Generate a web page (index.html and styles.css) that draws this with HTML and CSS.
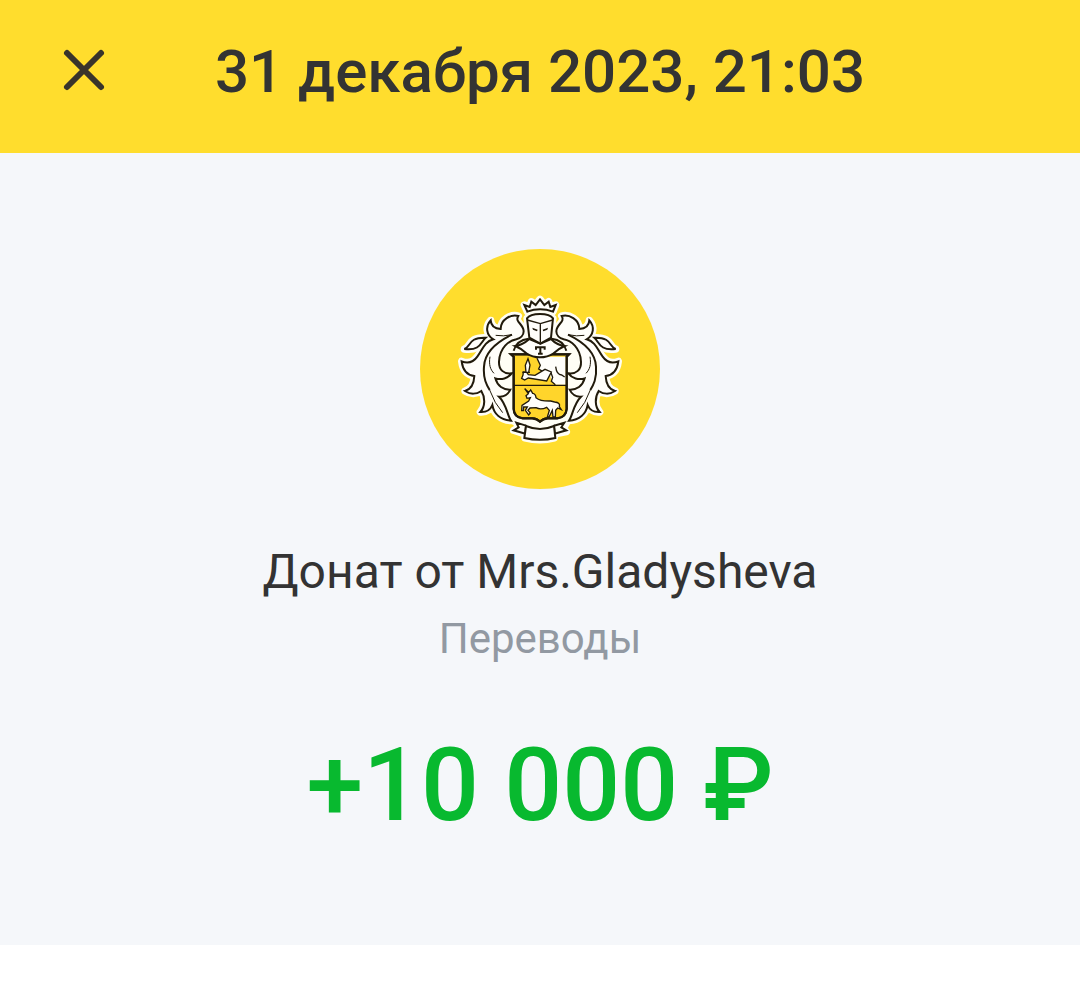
FILE: index.html
```html
<!DOCTYPE html>
<html lang="ru">
<head>
<meta charset="utf-8">
<meta name="viewport" content="width=device-width, initial-scale=1">
<title>Перевод</title>
<link rel="stylesheet" href="styles.css">
</head>
<body>
<header class="topbar">
  <button class="close" type="button" aria-label="Закрыть">
    <svg class="close-icon" viewBox="0 0 44 44" aria-hidden="true"><path d="M5 5 39 39M39 5 5 39"/></svg>
  </button>
  <h1 class="date">31 декабря 2023, 21:03</h1>
</header>
<main class="details">
  <svg class="logo" viewBox="30 27 720 720" role="img" aria-label="Герб банка">
    <defs>
      <g id="wing">
        <path d="M325 228C303 222 272 238 272 267C254 266 243 256 242 241C225 260 229 285 250 298C222 306 218 329 202 350C190 367 173 371 155 364C158 389 170 405 193 408C192 430 186 447 165 453C181 464 200 463 214 453C226 472 226 500 211 516C228 517 241 510 247 495C252 522 272 540 303 542C291 525 290 492 267 470C281 471 295 463 301 449C280 450 262 438 256 415C274 421 294 415 305 400C281 403 266 389 267 365C269 322 297 302 319 298C332 295 341 285 341 274C341 252 313 246 325 228Z"/>
        <path d="M163 327C183 321 174 291 227 293C213 305 211 334 163 327Z"/>
      </g>
      <g id="veins">
        <path d="M306 284C262 305 224 334 222 380C219 416 230 435 239 450"/>
        <path class="vein" d="M240 350C236 374 241 389 252 400M257 286Q280 290 306 284M239 450Q253 490 278 518"/>
      </g>
      <path id="crown" d="M352 215L343 195 359 201 364 185 377 195 390 178 403 195 416 185 421 201 437 195 429 215Q390 201 352 215Z"/>
      <path id="helmet" d="M351 235Q360 222 390 222Q420 222 429 235L423 293 391 311 358 293Z"/>
      <path id="shield" d="M303 343H477L470 350V507Q468 532 442 535H413Q399 536 390 545Q381 536 367 535H338Q312 532 311 507V350Z"/>
      <path id="ribbon" d="M343 562Q390 578 437 562L433 557 470 548 460 565 469 575 435 582 433 594Q390 605 345 594L347 583 311 571 326 562 319 548 348 557Z"/>
    </defs>
    <circle class="disc" cx="390" cy="387" r="360"/>
    <g class="halo">
      <use href="#wing"/><use href="#wing" transform="translate(780 0) scale(-1 1)"/>
      <use href="#crown"/><use href="#helmet"/><use href="#shield"/><use href="#ribbon"/>
      <path d="M345 275H435L510 315V520L430 565H350L270 520V315Z"/>
    </g>
    <g class="ink">
      <use href="#wing"/><use href="#veins"/>
      <g transform="translate(780 0) scale(-1 1)"><use href="#wing"/><use href="#veins"/></g>
      <use href="#crown"/>
      <path d="M356 296Q320 300 311 332M425 296Q460 300 469 332"/>
      <use href="#shield" class="field"/>
      <path class="patch" d="M381 355L391 376 386 387 398 393 405 406 420 404 425 425 438 434H467V350H390Z"/>
      <path class="fine" d="M381 355L391 376 386 387 399 395M422 396L428 412 424 424 436 434M437 380Q440 405 455 405L464 411"/>
      <path class="fine white" d="M340 396L350 397 355 404 375 406 405 388 424 396 410 423 355 414 344 420 335 415 339 405Z"/>
      <path class="fine white" d="M348 397L346 376 354 356 360 375 356 397ZM337 397H360"/>
      <path class="rule" d="M311 436H469"/>
      <path class="fine white" d="M344 446L356 457 362 450 368 460Q377 461 378 473Q391 484 422 483L434 486Q452 488 448 500L454 509 443 504 437 511 436 531H429L427 511 417 531H412L418 511 410 502Q392 511 378 503L360 504 354 511 361 519 356 525 346 511 352 501 341 501 340 512H335L336 496 356 483 361 473 351 475 348 467 355 461Z"/>
      <use href="#shield" class="outline"/>
      <path class="white" d="M316 318Q338 315 358 297L391 311 423 297Q440 315 464 318Q447 325 431 340Q412 352 390 352Q368 352 349 340Q333 325 316 318Z"/>
      <use href="#helmet"/>
      <path class="fine" d="M352 240L391 251 428 240M391 251V308"/>
      <path class="eyes" d="M367 263L383 269 381 274 369 269ZM414 263L398 269 400 274 412 269Z"/>
      <path class="letter" d="M378 329V322H404V329M391 322V341M384 341H398"/>
      <path d="M319 548L348 557 346 581 311 571 326 562ZM463 548L432 557 434 581 469 571 454 562Z"/>
      <path class="white" d="M348 558Q390 576 432 558L436 594Q390 605 343 594Z"/>
    </g>
  </svg>
  <h2 class="name">Донат от Mrs.Gladysheva</h2>
  <p class="category">Переводы</p>
  <p class="amount">+10 000 ₽</p>
</main>
</body>
</html>
```
FILE: styles.css
```css
* { box-sizing: border-box; }
body {
  margin: 0;
  background: #fff;
  color: #333;
  font-family: Roboto, "Noto Sans", sans-serif;
}
.topbar {
  display: grid;
  grid-template-columns: 44px 1fr 44px;
  align-items: start;
  padding: 36px 62px 45px;
  background: #ffdd2d;
}
.close {
  margin-top: 12px;
  padding: 0;
  border: 0;
  background: none;
  cursor: pointer;
}
.close-icon {
  display: block;
  width: 44px;
  height: 44px;
  fill: none;
  stroke: #38342b;
  stroke-width: 6;
  stroke-linecap: round;
}
.date {
  margin: 0;
  font-size: 60px;
  line-height: 72px;
  font-weight: 500;
  text-align: center;
}
.details {
  display: flex;
  flex-direction: column;
  align-items: center;
  padding: 96px 24px 100px;
  background: #f5f7fa;
  text-align: center;
}
.logo { width: 240px; height: 240px; }
.name {
  margin: 51px 0 0;
  font-size: 48px;
  line-height: 64px;
  font-weight: 400;
}
.category {
  margin: 8px 0 0;
  font-size: 42px;
  line-height: 54px;
  color: #9299a2;
}
.amount {
  margin: 59px 0 0;
  font-size: 102px;
  line-height: 120px;
  font-weight: 500;
  color: #08b92f;
}
.disc { fill: #ffdd2d; }
.halo { fill: #fffef5; stroke: #fffef5; stroke-width: 22; stroke-linejoin: round; }
.ink { fill: #fffefa; stroke: #211a0b; stroke-width: 6; }
#veins, .ink > path { fill: none; }
.ink .white { fill: #fffefa; }
.ink .patch { fill: #fffefa; stroke: none; }
.ink .field { fill: #ffd52b; }
.ink .outline { fill: none; stroke-width: 7; }
.ink .fine, .ink .rule { stroke-width: 4; }
.vein { stroke-width: 3; }
.ink .eyes { fill: #211a0b; stroke: none; }
.ink .letter { stroke-width: 6; }
```
